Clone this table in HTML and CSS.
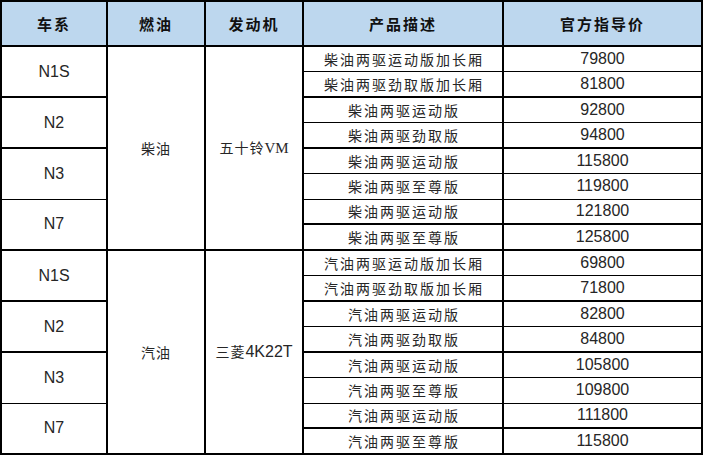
FILE: index.html
```html
<!DOCTYPE html>
<html lang="zh">
<head>
<meta charset="utf-8">
<link rel="stylesheet" href="styles.css">
</head>
<body>
<table class="t">
<colgroup><col class="c1"><col class="c2"><col class="c3"><col class="c4"><col class="c5"></colgroup>
<thead>
<tr class="h"><th>车系</th><th>燃油</th><th>发动机</th><th>产品描述</th><th>官方指导价</th></tr>
</thead>
<tbody>
<tr class="a"><td rowspan="2" class="s T">N1S</td><td rowspan="8" class="f T">柴油</td><td rowspan="8" class="e T">五十铃<span class="ser">VM</span></td><td class="d">柴油两驱运动版加长厢</td><td class="p">79800</td></tr>
<tr class="b T"><td class="d">柴油两驱劲取版加长厢</td><td class="p">81800</td></tr>
<tr class="a"><td rowspan="2" class="s T">N2</td><td class="d">柴油两驱运动版</td><td class="p">92800</td></tr>
<tr class="b T"><td class="d">柴油两驱劲取版</td><td class="p">94800</td></tr>
<tr class="a"><td rowspan="2" class="s">N3</td><td class="d">柴油两驱运动版</td><td class="p">115800</td></tr>
<tr class="b"><td class="d">柴油两驱至尊版</td><td class="p">119800</td></tr>
<tr class="a T"><td rowspan="2" class="s T">N7</td><td class="d">柴油两驱运动版</td><td class="p">121800</td></tr>
<tr class="b T"><td class="d">柴油两驱至尊版</td><td class="p">125800</td></tr>
<tr class="a"><td rowspan="2" class="s T">N1S</td><td rowspan="8" class="f">汽油</td><td rowspan="8" class="e">三菱<span class="num">4K22T</span></td><td class="d">汽油两驱运动版加长厢</td><td class="p">69800</td></tr>
<tr class="b T"><td class="d">汽油两驱劲取版加长厢</td><td class="p">71800</td></tr>
<tr class="a"><td rowspan="2" class="s T">N2</td><td class="d">汽油两驱运动版</td><td class="p">82800</td></tr>
<tr class="b T"><td class="d">汽油两驱劲取版</td><td class="p">84800</td></tr>
<tr class="a"><td rowspan="2" class="s">N3</td><td class="d">汽油两驱运动版</td><td class="p">105800</td></tr>
<tr class="b"><td class="d">汽油两驱至尊版</td><td class="p">109800</td></tr>
<tr class="a T"><td rowspan="2" class="s">N7</td><td class="d">汽油两驱运动版</td><td class="p">111800</td></tr>
<tr class="b"><td class="d">汽油两驱至尊版</td><td class="p">115800</td></tr>
</tbody>
</table>
</body>
</html>
```
FILE: styles.css
```css
html, body {
  margin: 0;
  padding: 0;
  background: #fff;
}
.t {
  border-collapse: collapse;
  table-layout: fixed;
  width: 701px;
  border: 2px solid #000;
  color: #262626;
  font-family: "Noto Sans CJK SC", "Liberation Sans", sans-serif;
}
.c1 { width: 106px; }
.c2 { width: 98px; }
.c3 { width: 98px; }
.c4 { width: 200px; }
.c5 { width: 199px; }
th, td {
  padding: 0;
  text-align: center;
  vertical-align: middle;
  border: 1px solid #000;
  border-left-width: 2px;
  border-right-width: 2px;
  line-height: 1;
}
th {
  background: #bdd7ee;
  color: #111;
  font-weight: 700;
  font-size: 15px;
  letter-spacing: 2px;
  height: 43px;
  border-bottom: 2px solid #000;
}
.a { height: 25px; }
.b { height: 26px; }
tr.T > td, td.T { border-bottom-width: 2px; }
.s {
  font-family: "Liberation Sans", Arial, sans-serif;
  font-size: 16px;
}
.f, .e {
  font-size: 14px;
  letter-spacing: 1px;
}
.ser {
  font-family: "Liberation Serif", serif;
  letter-spacing: 0;
  font-size: 15px;
}
.num {
  font-family: "Liberation Sans", Arial, sans-serif;
  font-size: 16px;
  letter-spacing: 0;
}
.d {
  font-size: 14px;
  letter-spacing: 2px;
  text-indent: 2px;
}
.p {
  font-family: "Liberation Sans", Arial, sans-serif;
  font-size: 16px;
}
```
